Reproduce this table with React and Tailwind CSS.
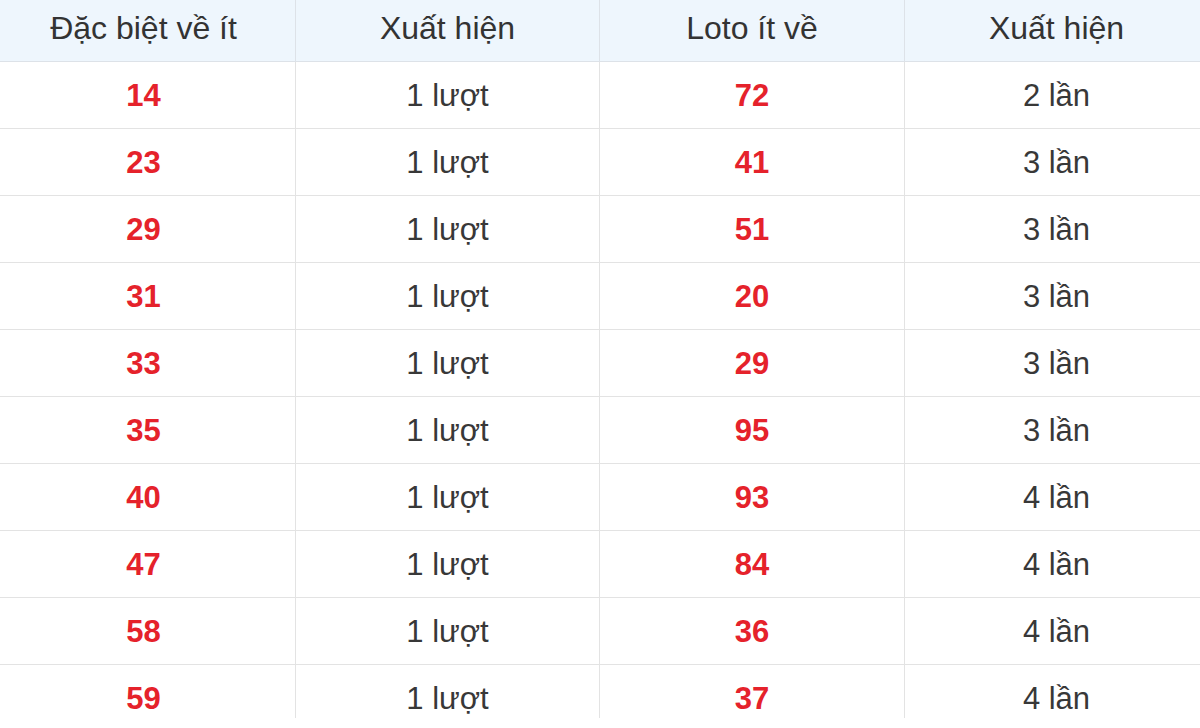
import React from "react";

const rows = [
  ["14", "1 lượt", "72", "2 lần"],
  ["23", "1 lượt", "41", "3 lần"],
  ["29", "1 lượt", "51", "3 lần"],
  ["31", "1 lượt", "20", "3 lần"],
  ["33", "1 lượt", "29", "3 lần"],
  ["35", "1 lượt", "95", "3 lần"],
  ["40", "1 lượt", "93", "4 lần"],
  ["47", "1 lượt", "84", "4 lần"],
  ["58", "1 lượt", "36", "4 lần"],
  ["59", "1 lượt", "37", "4 lần"],
];

const headers = ["Đặc biệt về ít", "Xuất hiện", "Loto ít về", "Xuất hiện"];

export default function App() {
  return (
    <div className="w-[1200px] h-[728px] bg-white overflow-hidden font-['Liberation_Sans',Arial,sans-serif]">
      <div className="h-[718px] overflow-hidden">
        <div className="ml-[-8px] w-[1217px]">
          {/* HEADER */}
          <div className="grid grid-cols-[304px_304px_305px_304px] h-[62px] bg-[#eef6fd] border-b border-[#dde2e8]">
            {headers.map((h, i) => (
              <div
                key={i}
                className="flex items-center justify-center border-r border-[#dde2e8] text-[32px] text-[#333] pb-[6px]"
              >
                {h}
              </div>
            ))}
          </div>

          {/* ROWS */}
          {rows.map((r, idx) => (
            <div
              key={idx}
              className="grid grid-cols-[304px_304px_305px_304px] h-[67px] border-b border-[#e3e3e3]"
            >
              {r.map((cell, i) => (
                <div
                  key={i}
                  className={
                    "flex items-center justify-center border-r border-[#e3e3e3] text-[31px] pt-[2px] " +
                    (i % 2 === 0 ? "font-bold text-[#e5222b]" : "text-[#383838]")
                  }
                >
                  {cell}
                </div>
              ))}
            </div>
          ))}
        </div>
      </div>
    </div>
  );
}
